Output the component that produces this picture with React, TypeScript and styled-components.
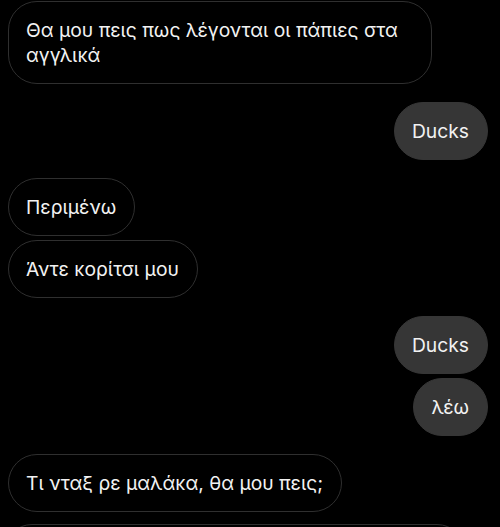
import styled, { createGlobalStyle } from 'styled-components'

const GlobalStyle = createGlobalStyle`
    html, body {
        margin: 0;
        padding: 0;
        background: #000;
        overflow: hidden;
    }
`

type Message = { id: number; text: string; mine?: boolean }

// grouped messages: small gap inside a group, bigger between groups
const groups: Message[][] = [
    [{ id: 1, text: 'Θα μου πεις πως λέγονται οι πάπιες στα αγγλικά' }],
    [{ id: 2, text: 'Ducks', mine: true }],
    [
        { id: 3, text: 'Περιμένω' },
        { id: 4, text: 'Άντε κορίτσι μου' },
    ],
    [
        { id: 5, text: 'Ducks', mine: true },
        { id: 6, text: 'λέω', mine: true },
    ],
    [{ id: 7, text: 'Τι νταξ ρε μαλάκα, θα μου πεις;' }],
]

const Chat = () => {
    return (
        <Wrapper>
            {groups.map((group, i) => (
                <Group key={i}>
                    {group.map((msg) => (
                        <Bubble key={msg.id} $mine={msg.mine}>
                            {msg.text}
                        </Bubble>
                    ))}
                </Group>
            ))}
            <Composer />
        </Wrapper>
    )
}

const Wrapper = styled.div`
    display: flex;
    flex-direction: column;
    gap: 18px;
    width: 500px;
    height: 527px;
    box-sizing: border-box;
    padding: 1px 12px 0 8px;
    background: #000;
    font-family: Inter, 'Noto Sans', sans-serif;
    overflow: hidden;
`

const Group = styled.div`
    display: flex;
    flex-direction: column;
    gap: 4px;
`

const Bubble = styled.div<{ $mine?: boolean }>`
    align-self: ${(p) => (p.$mine ? 'flex-end' : 'flex-start')};
    max-width: 424px;
    box-sizing: border-box;
    padding: 15.5px 18px 15.5px 17px;
    border-radius: 29px;
    font-size: 19.3px;
    line-height: 25px;
    color: #f2f2f2;
    background: ${(p) => (p.$mine ? '#363636' : '#000')};
    border: 1px solid ${(p) => (p.$mine ? '#363636' : '#2f2f2f')};
`

const Composer = styled.div`
    flex-shrink: 0;
    margin: -6px 23px 0 -4px;
    height: 60px;
    border: 1px solid #2f2f2f;
    border-radius: 28px;
`

const App = () => (
    <>
        <GlobalStyle />
        <Chat />
    </>
)

export default App
